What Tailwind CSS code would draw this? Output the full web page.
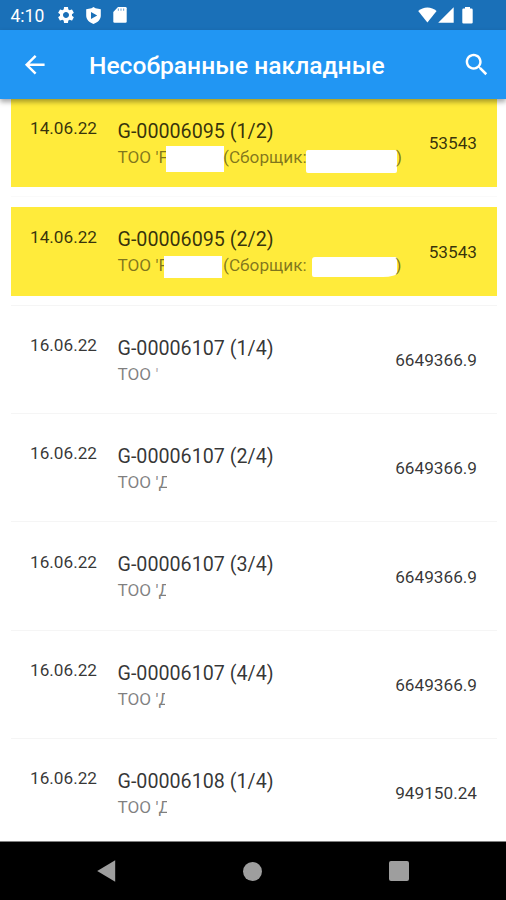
<!DOCTYPE html>
<html lang="ru">
<head>
    <meta charset="UTF-8">
    <meta name="viewport" content="width=device-width, initial-scale=1.0">
    <title>Несобранные накладные</title>
    <script src="https://cdn.jsdelivr.net/npm/@tailwindcss/browser@4"></script>
</head>
<body class="bg-white font-[Roboto,sans-serif] h-screen overflow-hidden">
    <div class="w-[506px] h-[900px] flex flex-col overflow-hidden">
        <!-- Status bar -->
        <div class="h-[30px] shrink-0 bg-[#1a70b8] text-white flex items-center pl-[10.5px] pr-[28px]">
            <span class="w-[45.5px] text-[17.5px] leading-[30px] pt-0.5">4:10</span>
            <svg class="w-5 h-5" viewBox="0 0 24 24" fill="currentColor"><path d="M19.14 12.94c.04-.3.06-.61.06-.94 0-.32-.02-.64-.07-.94l2.03-1.58c.18-.14.23-.41.12-.61l-1.92-3.32c-.12-.22-.37-.29-.59-.22l-2.39.96c-.5-.38-1.03-.7-1.62-.94l-.36-2.54c-.04-.24-.24-.41-.48-.41h-3.84c-.24 0-.43.17-.47.41l-.36 2.54c-.59.24-1.13.57-1.62.94l-2.39-.96c-.22-.08-.47 0-.59.22L2.74 8.87c-.12.21-.08.47.12.61l2.03 1.58c-.05.3-.09.63-.09.94s.02.64.07.94l-2.03 1.58c-.18.14-.23.41-.12.61l1.92 3.32c.12.22.37.29.59.22l2.39-.96c.5.38 1.03.7 1.62.94l.36 2.54c.05.24.24.41.48.41h3.84c.24 0 .44-.17.47-.41l.36-2.54c.59-.24 1.13-.56 1.62-.94l2.39.96c.22.08.47 0 .59-.22l1.92-3.32c.12-.22.07-.47-.12-.61l-2.01-1.58zM12 15.6c-1.98 0-3.6-1.62-3.6-3.6s1.62-3.6 3.6-3.6 3.6 1.62 3.6 3.6-1.62 3.6-3.6 3.6z"/></svg>
            <svg class="w-[15px] h-[17px] ml-[10px]" viewBox="0 0 15 17" fill="currentColor" fill-rule="evenodd"><path d="M7.5 0 9.5 1.3 14.8 2.3V8.5C14.8 12.6 11.8 15.4 7.5 17 3.2 15.4.2 12.6.2 8.5V2.3L5.5 1.3ZM5 5V12L11.2 8.5Z"/></svg>
            <svg class="w-[14px] h-4 ml-[12px]" viewBox="0 0 14 16" fill="currentColor"><path d="M5 0H12.5Q13.7 0 13.7 1.3V14.5Q13.7 15.8 12.4 15.8H1.6Q.3 15.8.3 14.5V5Z"/><path d="M5.4 1.5V3.8M8 1.5V3.8M10.6 1.5V3.8" stroke="#1a70b8" stroke-opacity=".55" stroke-width="1.2"/></svg>
            <div class="ml-auto flex items-center">
                <svg class="w-[19px] h-[16px]" viewBox="0 0 19 16" fill="currentColor"><path d="M9.4 15.6.2 4.1C2.8 1.6 6 .4 9.4.4S16 1.6 18.6 4.1Z"/></svg>
                <svg class="w-4 h-4 ml-[1px]" viewBox="0 0 16 16" fill="currentColor"><path d="M.2 15.8H15.7V.3Z"/></svg>
                <svg class="w-[11px] h-[17px] ml-[8px] mr-[5px]" viewBox="0 0 11 17" fill="currentColor"><path d="M3 0H8V1.6H9.5Q10.7 1.6 10.7 2.8V15.5Q10.7 16.6 9.5 16.6H1.5Q.3 16.6.3 15.5V2.8Q.3 1.6 1.5 1.6H3Z"/></svg>
            </div>
        </div>

        <!-- App bar -->
        <header class="relative z-10 h-[69px] shrink-0 bg-[#2196f3] text-white flex items-center pl-5 pr-[14.5px] shadow-[0_3px_5px_rgba(0,0,0,0.35)]">
            <svg class="w-[29.5px] h-[29.5px]" viewBox="0 0 24 24" fill="currentColor"><path d="M20 11H7.83l5.59-5.59L12 4l-8 8 8 8 1.41-1.41L7.83 13H20v-2z"/></svg>
            <h1 class="ml-[39.5px] pt-1 text-[24.6px] leading-none font-medium whitespace-nowrap">Несобранные накладные</h1>
            <svg class="w-[29.5px] h-[29.5px] ml-auto" viewBox="0 0 24 24" fill="currentColor"><path d="M15.5 14h-.79l-.28-.27C15.41 12.59 16 11.11 16 9.5 16 5.91 13.09 3 9.5 3S3 5.91 3 9.5 5.91 16 9.5 16c1.61 0 3.09-.59 4.23-1.57l.27.28v.79l5 4.99L20.49 19l-4.99-5zm-6 0C7.01 14 5 11.99 5 9.5S7.01 5 9.5 5 14 7.01 14 9.5 11.99 14 9.5 14z"/></svg>
        </header>

        <!-- Invoice list -->
        <ul class="flex-1 min-h-0 overflow-hidden pl-[10.5px] pr-[9.5px] text-black/80">
            <li class="h-[108.33px]">
                <div class="h-[88px] bg-[#ffeb3b] flex px-[19.5px]">
                    <span class="w-[87.5px] pt-[19.4px] text-[17.2px] leading-5">14.06.22</span>
                    <div class="flex-1 pt-[21px]">
                        <p class="text-[19.7px] leading-6">G-00006095 (1/2)</p>
                        <div class="flex items-center h-[26px] text-[17.2px] leading-[26px] text-black/50 whitespace-nowrap">
                            <span class="w-[48.5px]">ТОО 'F</span>
                            <span class="w-[58px] h-[26px] mt-1 bg-white"></span>
                            <span class="w-[82px] -ml-px mr-px">(Сборщик:</span>
                            <span class="w-[91px] h-[23px] mt-[9px] bg-white rounded-xs"></span>
                            <span class="-ml-px">)</span>
                        </div>
                    </div>
                    <span class="pt-[34.4px] text-[17.2px] leading-5">53543</span>
                </div>
                <div class="h-px mt-[9px] bg-[#fafafa]"></div>
            </li>
            <li class="h-[108.33px]">
                <div class="h-[88.5px] bg-[#ffeb3b] flex px-[19.5px]">
                    <span class="w-[87.5px] pt-[19.4px] text-[17.2px] leading-5">14.06.22</span>
                    <div class="flex-1 pt-[21px]">
                        <p class="text-[19.7px] leading-6">G-00006095 (2/2)</p>
                        <div class="flex items-center h-[26px] text-[17.2px] leading-[26px] text-black/50 whitespace-nowrap">
                            <span class="w-[46px]">ТОО 'F</span>
                            <span class="w-[58px] h-[22px] mt-[3px] bg-white"></span>
                            <span class="w-[90px] pl-[1.5px]">(Сборщик:</span>
                            <span class="w-[85px] h-[20px] mt-[3px] bg-white rounded-[3px_2px_14px_2px/3px_2px_4px_2px]"></span>
                            <span class="-ml-px">)</span>
                        </div>
                    </div>
                    <span class="pt-[34.4px] text-[17.2px] leading-5">53543</span>
                </div>
                <div class="h-px mt-[9px] bg-[#f5f5f5]"></div>
            </li>
            <li class="h-[108.33px]">
                <div class="h-[88.5px] flex px-[19.5px]">
                    <span class="w-[87.5px] pt-[19.4px] text-[17.2px] leading-5">16.06.22</span>
                    <div class="flex-1 pt-[21px]">
                        <p class="text-[19.7px] leading-6">G-00006107 (1/4)</p>
                        <p class="text-[17.2px] leading-[26px] text-black/50 whitespace-nowrap">ТОО <span class="text-black/35">'</span></p>
                    </div>
                    <span class="pt-[34.4px] text-[17.2px] leading-5">6649366.9</span>
                </div>
                <div class="h-px mt-[9px] bg-[#f5f5f5]"></div>
            </li>
            <li class="h-[108.33px]">
                <div class="h-[88.5px] flex px-[19.5px]">
                    <span class="w-[87.5px] pt-[19.4px] text-[17.2px] leading-5">16.06.22</span>
                    <div class="flex-1 pt-[21px]">
                        <p class="text-[19.7px] leading-6">G-00006107 (2/4)</p>
                        <div class="flex h-[26px] text-[17.2px] leading-[26px] text-black/50 whitespace-nowrap">
                            <span class="w-[49.5px]">ТОО 'Д</span>
                            <span class="w-14 bg-white"></span>
                        </div>
                    </div>
                    <span class="pt-[34.4px] text-[17.2px] leading-5">6649366.9</span>
                </div>
                <div class="h-px mt-[9px] bg-[#f5f5f5]"></div>
            </li>
            <li class="h-[108.33px]">
                <div class="h-[88.5px] flex px-[19.5px]">
                    <span class="w-[87.5px] pt-[19.4px] text-[17.2px] leading-5">16.06.22</span>
                    <div class="flex-1 pt-[21px]">
                        <p class="text-[19.7px] leading-6">G-00006107 (3/4)</p>
                        <div class="flex h-[26px] text-[17.2px] leading-[26px] text-black/50 whitespace-nowrap">
                            <span class="w-[48px]">ТОО 'Д</span>
                            <span class="w-14 bg-white"></span>
                        </div>
                    </div>
                    <span class="pt-[34.4px] text-[17.2px] leading-5">6649366.9</span>
                </div>
                <div class="h-px mt-[9px] bg-[#f5f5f5]"></div>
            </li>
            <li class="h-[108.33px]">
                <div class="h-[88.5px] flex px-[19.5px]">
                    <span class="w-[87.5px] pt-[19.4px] text-[17.2px] leading-5">16.06.22</span>
                    <div class="flex-1 pt-[21px]">
                        <p class="text-[19.7px] leading-6">G-00006107 (4/4)</p>
                        <div class="flex h-[26px] text-[17.2px] leading-[26px] text-black/50 whitespace-nowrap">
                            <span class="w-[47.5px]">ТОО 'Д</span>
                            <span class="w-14 bg-white"></span>
                        </div>
                    </div>
                    <span class="pt-[34.4px] text-[17.2px] leading-5">6649366.9</span>
                </div>
                <div class="h-px mt-[9px] bg-[#f5f5f5]"></div>
            </li>
            <li class="h-[108.33px]">
                <div class="h-[88.5px] flex px-[19.5px]">
                    <span class="w-[87.5px] pt-[19.4px] text-[17.2px] leading-5">16.06.22</span>
                    <div class="flex-1 pt-[21px]">
                        <p class="text-[19.7px] leading-6">G-00006108 (1/4)</p>
                        <div class="flex h-[26px] text-[17.2px] leading-[26px] text-black/50 whitespace-nowrap">
                            <span class="w-[49.5px]">ТОО 'Д</span>
                            <span class="w-14 bg-white"></span>
                        </div>
                    </div>
                    <span class="pt-[34.4px] text-[17.2px] leading-5">949150.24</span>
                </div>
            </li>
        </ul>

        <!-- Navigation bar -->
        <nav class="h-[59px] shrink-0 bg-black border-t border-[#808080] text-[#9e9e9e] flex items-center justify-between pl-[97px] pr-[97px]">
            <svg class="w-[19px] h-[22px]" viewBox="0 0 19 22" fill="currentColor"><path d="M.2 11 18.2.2V21.8Z"/></svg>
            <span class="w-[19px] h-[19px] rounded-full bg-[#9e9e9e]"></span>
            <span class="w-5 h-5 rounded-xs bg-[#9e9e9e]"></span>
        </nav>
    </div>
</body>
</html>
